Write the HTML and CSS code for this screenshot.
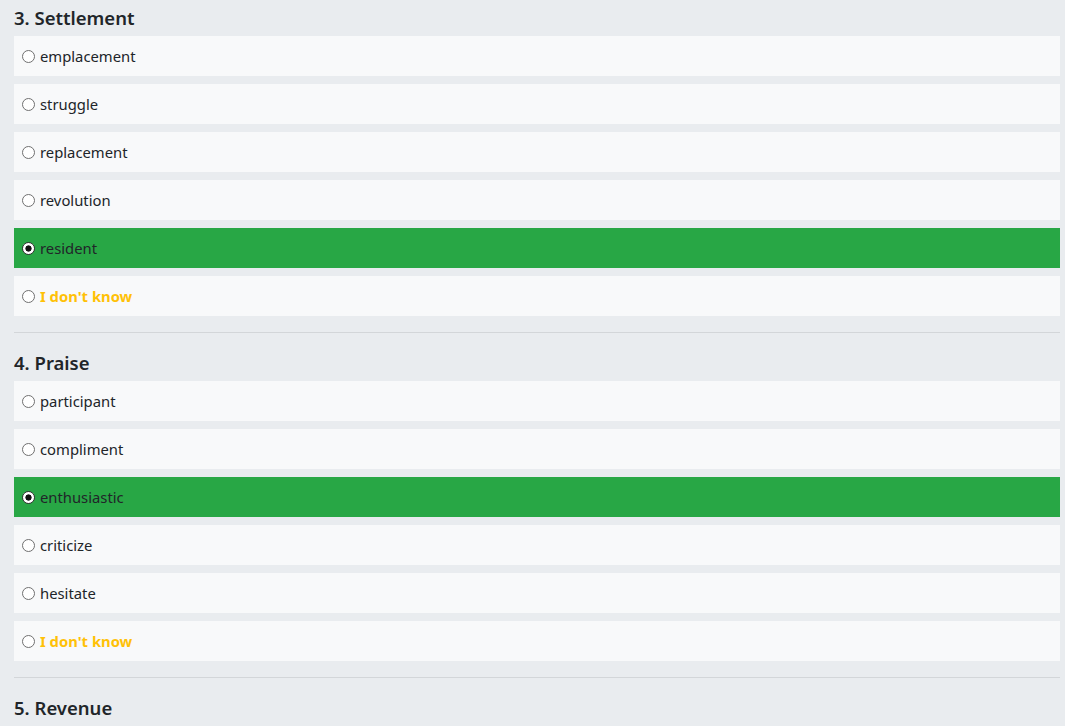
FILE: index.html
```html
<!DOCTYPE html>
<html>
<head>
<meta charset="utf-8">
<link rel="stylesheet" href="styles.css">
</head>
<body>
<div class="quiz">
  <section class="question">
    <h2 class="q-title">3. Settlement</h2>
    <div class="options">
      <label class="option"><span class="radio"></span><span class="label">emplacement</span></label>
      <label class="option"><span class="radio"></span><span class="label">struggle</span></label>
      <label class="option"><span class="radio"></span><span class="label">replacement</span></label>
      <label class="option"><span class="radio"></span><span class="label">revolution</span></label>
      <label class="option selected"><span class="radio checked"></span><span class="label">resident</span></label>
      <label class="option"><span class="radio"></span><span class="label unknown">I don't know</span></label>
    </div>
    <hr class="sep">
  </section>
  <section class="question">
    <h2 class="q-title">4. Praise</h2>
    <div class="options">
      <label class="option"><span class="radio"></span><span class="label">participant</span></label>
      <label class="option"><span class="radio"></span><span class="label">compliment</span></label>
      <label class="option selected"><span class="radio checked"></span><span class="label">enthusiastic</span></label>
      <label class="option"><span class="radio"></span><span class="label">criticize</span></label>
      <label class="option"><span class="radio"></span><span class="label">hesitate</span></label>
      <label class="option"><span class="radio"></span><span class="label unknown">I don't know</span></label>
    </div>
    <hr class="sep">
  </section>
  <section class="question">
    <h2 class="q-title">5. Revenue</h2>
  </section>
</div>
</body>
</html>
```
FILE: styles.css
```css
html, body {
  margin: 0;
  padding: 0;
  background: #e9ecef;
}
body {
  font-family: "Noto Sans", "Open Sans", sans-serif;
  color: #212529;
  overflow: hidden;
}
.quiz {
  padding: 5px 5px 0 14px;
}
.q-title {
  margin: 0 0 5px;
  font-size: 18.5px;
  line-height: 26px;
  font-weight: 600;
  color: #212529;
}
.options {
  display: flex;
  flex-direction: column;
  gap: 8px;
}
.option {
  display: flex;
  align-items: center;
  height: 40px;
  padding-left: 8px;
  background: #f8f9fa;
  font-size: 14.8px;
}
.option.selected {
  background: #28a745;
}
.radio {
  box-sizing: border-box;
  width: 13px;
  height: 13px;
  border-radius: 50%;
  border: 1.5px solid #707070;
  background: #fff;
  margin-right: 5px;
  position: relative;
  top: 0px;
  flex: none;
}
.radio.checked {
  border-color: #333;
  background: radial-gradient(circle, #111 0 2.8px, #fff 3.4px);
}
.label.unknown {
  color: #ffc107;
  font-weight: 700;
}
.sep {
  margin: 16px 0 17px;
  border: 0;
  border-top: 1px solid #d3d6d9;
  height: 0;
}
```
